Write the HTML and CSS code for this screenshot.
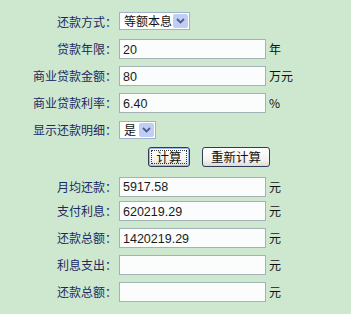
FILE: index.html
```html
<!DOCTYPE html>
<html lang="zh-CN">
  <head>
    <meta charset="UTF-8" />
    <meta name="viewport" content="width=device-width, initial-scale=1.0" />
    <title>房贷计算器</title>
    <link rel="stylesheet" href="styles.css">
  </head>
  <body>
    <form class="calc-form">
      <label class="field-label">还款方式：</label>
      <div class="dropdown dropdown-wide" role="combobox">
        <span class="dropdown-value">等额本息</span>
        <span class="dropdown-arrow"><svg width="9" height="6" viewBox="0 0 9 6"><path d="M1 1 L4.5 4.5 L8 1" fill="none" stroke="#4a5f8c" stroke-width="1.8"/></svg></span>
      </div>
      <span class="unit"></span>

      <label class="field-label">贷款年限：</label>
      <input class="text-input" type="text" value="20">
      <span class="unit">年</span>

      <label class="field-label">商业贷款金额：</label>
      <input class="text-input" type="text" value="80">
      <span class="unit">万元</span>

      <label class="field-label">商业贷款利率：</label>
      <input class="text-input" type="text" value="6.40">
      <span class="unit">%</span>

      <label class="field-label">显示还款明细：</label>
      <div class="dropdown dropdown-narrow" role="combobox">
        <span class="dropdown-value">是</span>
        <span class="dropdown-arrow"><svg width="9" height="6" viewBox="0 0 9 6"><path d="M1 1 L4.5 4.5 L8 1" fill="none" stroke="#4a5f8c" stroke-width="1.8"/></svg></span>
      </div>
      <span class="unit"></span>

      <div class="button-row">
        <button type="button" class="xp-button btn-calc focused">计算</button>
        <button type="reset" class="xp-button btn-reset">重新计算</button>
      </div>

      <label class="field-label result-first">月均还款：</label>
      <input class="text-input result-first" type="text" value="5917.58">
      <span class="unit result-first">元</span>

      <label class="field-label">支付利息：</label>
      <input class="text-input" type="text" value="620219.29">
      <span class="unit">元</span>

      <label class="field-label">还款总额：</label>
      <input class="text-input" type="text" value="1420219.29">
      <span class="unit">元</span>

      <label class="field-label">利息支出：</label>
      <input class="text-input" type="text" value="">
      <span class="unit">元</span>

      <label class="field-label">还款总额：</label>
      <input class="text-input" type="text" value="">
      <span class="unit">元</span>
    </form>
  </body>
</html>
```

FILE: styles.css
```css
body {
  margin: 0;
  background-color: #cde8cf;
  font-family: "Noto Sans CJK SC", "Liberation Sans", sans-serif;
}

.calc-form {
  display: grid;
  grid-template-columns: 119px 147px 1fr;
  grid-auto-rows: 20px;
  row-gap: 7px;
  align-items: center;
  padding-top: 12px;
}

.field-label {
  padding-right: 2px;
  text-align: right;
  font-size: 12px;
  line-height: 20px;
  color: #1d2962;
  white-space: nowrap;
}

.unit {
  padding-left: 3px;
  font-size: 12px;
  line-height: 20px;
  color: #111;
}

.text-input {
  box-sizing: border-box;
  width: 147px;
  height: 20px;
  margin: 0;
  padding: 1px 3px 0;
  border: 1px solid #a2b2b6;
  background-color: #fbfdfd;
  font-family: "Liberation Sans", sans-serif;
  font-size: 12.5px;
  color: #1a1a1a;
  outline: none;
}

.dropdown {
  box-sizing: border-box;
  display: flex;
  align-items: stretch;
  height: 18px;
  padding: 1px;
  border: 1px solid #9fb3c8;
  background-color: #fff;
}

.dropdown-wide {
  width: 71px;
  align-self: start;
}

.dropdown-narrow {
  width: 37px;
}

.dropdown-value {
  flex: 1;
  display: flex;
  align-items: center;
  padding-left: 3px;
  font-size: 12px;
  line-height: 14px;
  color: #111;
  white-space: nowrap;
}

.dropdown-arrow {
  width: 15px;
  display: flex;
  align-items: center;
  justify-content: center;
  border-radius: 2px;
  background-color: #c1cdf5;
}

.button-row {
  grid-column: 1 / 4;
  display: flex;
  gap: 12px;
  padding-left: 148px;
}

.xp-button {
  box-sizing: border-box;
  height: 20px;
  padding: 0;
  border: 1px solid #2f3b58;
  border-radius: 3px;
  background: linear-gradient(#ffffff, #f2f2ec 70%, #dcdcd2);
  font-family: "Noto Sans CJK SC", sans-serif;
  font-size: 12.5px;
  line-height: 18px;
  color: #111;
  cursor: pointer;
}

.btn-calc {
  width: 42px;
}

.btn-reset {
  width: 68px;
}

.focused {
  box-shadow: inset 0 0 0 1px #9db7ee;
  outline: 1px dotted #333;
  outline-offset: -4px;
}

.result-first {
  margin-top: 5px;
}
```
